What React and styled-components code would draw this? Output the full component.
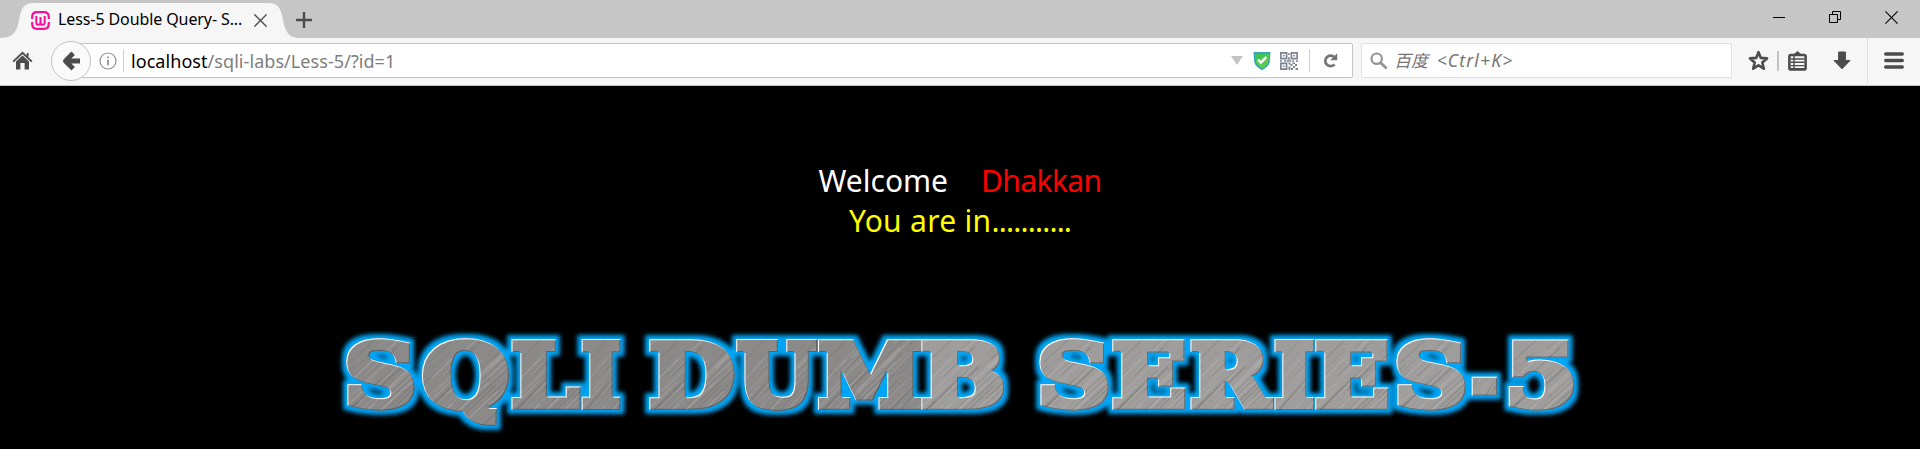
import React from "react";
import styled, { createGlobalStyle } from "styled-components";

const GlobalStyle = createGlobalStyle`
  * { box-sizing: border-box; }
  html, body { margin: 0; background: #000; overflow: hidden; }
  svg { display: block; flex: none; }
`;

const ui = `"Noto Sans", "Noto Sans CJK SC", sans-serif`;

const Window = styled.div`
  width: 1920px;
  height: 449px;
  display: flex;
  flex-direction: column;
  background: #000;
  font-family: ${ui};
`;

const TabBar = styled.header`
  flex: none;
  height: 38px;
  display: flex;
  align-items: flex-start;
  background: #c6c6c6;
`;

const Tab = styled.div`
  position: relative;
  width: 300px;
  height: 38px;
  padding: 2px 0 0 31px;
  display: flex;
  align-items: center;
`;

const TabShape = styled.svg`
  position: absolute;
  left: 0;
  top: 0;
`;

const TabTitle = styled.span`
  position: relative;
  width: 196px;
  margin-left: 8px;
  margin-top: -2px;
  font-size: 16px;
  line-height: 20px;
  letter-spacing: ${(p) => p.$track}px;
  color: #000;
  white-space: nowrap;
`;

const Layer = styled.span`
  position: relative;
  display: flex;
`;

const NewTab = styled.div`
  margin-top: 12px;
  margin-left: -4px;
`;

const WindowButtons = styled.div`
  margin-left: auto;
  height: 34px;
  padding-right: 22px;
  display: flex;
  align-items: center;
  gap: 43px;
`;

const Toolbar = styled.nav`
  flex: none;
  height: 48px;
  display: flex;
  align-items: center;
  padding: 0 0 2px 12px;
  background: #f6f6f6;
  border-bottom: 1px solid #c2c2c2;
`;

const BackButton = styled.div`
  position: relative;
  z-index: 1;
  width: 40px;
  height: 40px;
  margin-left: 18px;
  border: 1px solid #c2c2c2;
  border-radius: 50%;
  background: #fafafa;
  display: flex;
  align-items: center;
  justify-content: center;
`;

const Field = styled.div`
  height: 35px;
  display: flex;
  align-items: center;
  background: #fff;
  border: 1px solid ${(p) => p.$line};
  border-radius: 2px;
`;

const AddressBar = styled(Field)`
  width: 1282px;
  margin-left: -20px;
  padding: 0 14px 0 27px;
`;

const Url = styled.span`
  margin-left: 7px;
  font-size: 18px;
  line-height: 24px;
  letter-spacing: ${(p) => p.$track}px;
  color: #7d7d7d;
  white-space: nowrap;
`;

const Host = styled.span`
  color: #000;
`;

const AddressActions = styled.div`
  margin-left: auto;
  display: flex;
  align-items: center;
`;

const Rule = styled.i`
  width: ${(p) => p.$w || 1}px;
  height: ${(p) => p.$h}px;
  margin: 0 ${(p) => p.$right || 0}px 0 ${(p) => p.$left || 0}px;
  background: ${(p) => p.$c || "#cfcfcf"};
`;

const SearchBar = styled(Field)`
  width: 371px;
  margin-left: 8px;
  padding-left: 8px;
`;

const SearchHint = styled.span`
  margin-left: 6px;
  font-size: 17px;
  line-height: 24px;
  font-style: italic;
  color: #757575;
  white-space: pre;
`;

const Shortcut = styled.span`
  margin-left: 3px;
  font-size: 17.5px;
  letter-spacing: 1.15px;
`;

const ToolIcons = styled.div`
  flex: 1;
  padding-left: 16px;
  display: flex;
  align-items: center;
`;

const Gap = styled.i`
  width: ${(p) => p.$w}px;
`;

const Page = styled.main`
  flex: 1;
  min-height: 0;
  display: flex;
  flex-direction: column;
  align-items: center;
  padding-top: 75px;
`;

const Line = styled.div`
  display: flex;
  gap: ${(p) => p.$gap || 0}px;
  height: 40px;
  line-height: 40px;
  font-size: 30px;
  letter-spacing: ${(p) => p.$track || 0}px;
  color: ${(p) => p.$color};
  white-space: pre;
`;

const Name = styled.span`
  letter-spacing: -0.6px;
  color: #f00;
`;

const Dots = styled.span`
  letter-spacing: -0.8px;
`;

const Banner = styled.svg`
  margin-top: 89px;
  overflow: visible;
`;

/* Each letter of the banner with its left and right edge. */
const LETTERS = [
  ["S", 346, 415], ["Q", 422, 509], ["L", 511, 581], ["I", 581, 621],
  ["D", 649, 735], ["U", 736, 818], ["M", 818, 922], ["B", 921, 1004],
  ["S", 1039, 1109], ["E", 1112, 1186], ["R", 1190, 1274], ["I", 1274, 1315],
  ["E", 1315, 1389], ["S", 1396, 1466], ["-", 1471, 1498], ["5", 1509, 1575],
];

const BANNER_FONT = `"DejaVu Serif", serif`;
const STROKE = 8;

const measure = (() => {
  const ctx = document.createElement("canvas").getContext("2d");
  ctx.font = `bold 100px ${BANNER_FONT}`;
  return (ch) => {
    const m = ctx.measureText(ch);
    return { left: -m.actualBoundingBoxLeft, right: m.actualBoundingBoxRight };
  };
})();

const SCRATCHES = Array.from({ length: 110 }, (_, i) => {
  const r = (n) => Math.abs(Math.sin((i + 1) * n) * 43758.5453) % 1;
  return {
    x: r(12.98) * 150 - 40,
    y: r(78.23) * 150 - 100,
    len: 14 + r(3.71) * 40,
    light: r(9.17) > 0.45,
    o: 0.12 + r(5.31) * 0.3,
  };
});

function Letter({ ch, from, to }) {
  const m = measure(ch);
  const half = STROKE / 2;
  const sx = (to - from - STROKE) / (m.right - m.left);
  const sy = ch === "-" ? 0.75 : 0.86;
  const y = ch === "-" ? 406 : 405.5;
  const steel = from < 900 ? "url(#steel-dark)" : "url(#steel-light)";
  return (
    <g filter="url(#bevel)">
      <text
        transform={`translate(${from + half - m.left * sx} ${y}) scale(${sx} ${sy})`}
        fontFamily={BANNER_FONT}
        fontWeight="bold"
        fontSize="100"
        fill={steel}
        stroke={steel}
        strokeWidth={STROKE}
        vectorEffect="non-scaling-stroke"
      >
        {ch}
      </text>
    </g>
  );
}

const Steel = ({ id, base }) => (
  <pattern id={id} x="0" y="-90" width="110" height="130" patternUnits="userSpaceOnUse">
    <rect width="110" height="130" fill={base} />
    <g transform="translate(0 90)">
      {SCRATCHES.map((s, i) => (
        <path
          key={i}
          d={`M${s.x} ${s.y}l${s.len} ${-s.len * 1.1}`}
          stroke={s.light ? "#c4c2c0" : "#626060"}
          strokeOpacity={s.o}
          strokeWidth="1.1"
        />
      ))}
    </g>
  </pattern>
);

function BannerTitle() {
  return (
    <Banner width="1920" height="119" viewBox="0 330 1920 119">
      <defs>
        <Steel id="steel-dark" base="#8c8a89" />
        <Steel id="steel-light" base="#9f9d9b" />
        <filter id="bevel" x="-10%" y="-10%" width="120%" height="120%" colorInterpolationFilters="sRGB">
          <feOffset in="SourceAlpha" dx="1.2" dy="1.2" result="se" />
          <feFlood floodColor="#fff" />
          <feComposite in2="SourceAlpha" operator="in" />
          <feComposite in2="se" operator="out" result="light" />
          <feOffset in="SourceAlpha" dx="-1" dy="-1" result="nw" />
          <feFlood floodColor="#223744" floodOpacity="0.5" />
          <feComposite in2="SourceAlpha" operator="in" />
          <feComposite in2="nw" operator="out" result="dark" />
          <feMerge>
            <feMergeNode in="SourceGraphic" />
            <feMergeNode in="dark" />
            <feMergeNode in="light" />
          </feMerge>
        </filter>
        <filter id="glow" filterUnits="userSpaceOnUse" x="320" y="310" width="1280" height="139" colorInterpolationFilters="sRGB">
          <feMorphology in="SourceAlpha" operator="dilate" radius="4" />
          <feGaussianBlur stdDeviation="2" result="halo" />
          <feFlood floodColor="#00a6f8" />
          <feComposite in2="halo" operator="in" result="blue" />
          <feMerge>
            <feMergeNode in="blue" />
            <feMergeNode in="SourceGraphic" />
          </feMerge>
        </filter>
      </defs>
      <g filter="url(#glow)">
        {LETTERS.map(([ch, from, to]) => (
          <Letter key={from} ch={ch} from={from} to={to} />
        ))}
      </g>
    </Banner>
  );
}

const Favicon = () => (
  <svg width="19" height="19" viewBox="0 0 19 19" fill="none" stroke="#f6109b">
    <path d="M1.2 8V6Q1.2 1.2 6 1.2H13Q17.8 1.2 17.8 6V8M17.8 11V13Q17.8 17.8 13 17.8H6Q1.2 17.8 1.2 13V11" strokeWidth="2.2" />
    <path d="M5.3 5V11.2Q5.3 13.7 7.4 13.7T9.5 11.2V6M9.5 11.2Q9.5 13.7 11.6 13.7T13.7 11.2V5" strokeWidth="2" />
  </svg>
);

const Cross = ({ size, width, color }) => (
  <svg width={size} height={size} viewBox="0 0 13 13" stroke={color} strokeWidth={width}>
    <path d="M.4.4 12.6 12.6M12.6.4.4 12.6" />
  </svg>
);

const HomeIcon = () => (
  <svg width="21" height="19" viewBox="0 0 21 19" fill="#4c4c4c">
    <path d="M10.5 4.6 17 10.6V18.5H12.6V12H8.4V18.5H4V10.6Z" />
    <path d="M1.2 10.6 10.5 1.7 19.8 10.6M15.7 2V5.5" fill="none" stroke="#4c4c4c" strokeWidth="1.9" />
  </svg>
);

const BackIcon = () => (
  <svg width="20" height="20" viewBox="0 0 20 20" fill="none" stroke="#4c4c4c" strokeWidth="4.8" strokeLinejoin="round">
    <path d="M12.2 2.2 4.4 10 12.2 17.8M5 10H19" />
  </svg>
);

const InfoIcon = () => (
  <svg width="18" height="18" viewBox="0 0 18 18" fill="none" stroke="#919191">
    <circle cx="9" cy="9" r="8" strokeWidth="1.2" />
    <path d="M9 7.8V13.2M9 4.5V6.3" strokeWidth="1.8" />
  </svg>
);

const ShieldIcon = () => (
  <svg width="18" height="20" viewBox="0 0 18 20">
    <path d="M.5 1H17.5L16.8 11Q16 15.5 9 19.3Q2 15.5 1.2 11Z" fill="#35a5b8" />
    <path d="M2 2.4H16L15.4 10.5Q14.5 14.5 9 17.6Q3.5 14.5 2.6 10.5Z" fill="#43c254" />
    <path d="M16 2.4L15.4 10.5Q14.5 14.5 9 17.6L2.6 11Z" fill="#62ce55" opacity=".7" />
    <path d="M5 8.7 8 11.6 13.2 6.2" fill="none" stroke="#fff" strokeWidth="2.4" />
  </svg>
);

const QrIcon = () => (
  <svg width="18" height="18" viewBox="0 0 18 18" fill="none" stroke="#7c8492" strokeWidth="1.7">
    <path d="M.9.9H6.6V6.6H.9ZM11.4.9H17.1V6.6H11.4ZM.9 11.4H6.6V17.1H.9Z" />
    <path
      stroke="none"
      fill="#7c8492"
      d="M3 3H4.6V4.6H3ZM13.4 3H15V4.6H13.4ZM3 13.4H4.6V15H3ZM8.2 1H9.7V3H8.2ZM8.2 5H9.7V8H8.2ZM0 8.2H2V9.8H0ZM4 8.2H6V9.8H4ZM6.5 8.2H11V9.8H6.5ZM12 8.2H14V9.8H12ZM16 8.2H18V9.8H16ZM8.5 10.5H10.5V12.5H8.5ZM10.5 12H12.5V14H10.5ZM12.5 10.5H15V12H12.5ZM15 12H17V14H15ZM8.5 14.5H10.5V18H8.5ZM13 14H15V16H13ZM11 16H13V18H11ZM15.5 16H18V18H15.5Z"
    />
  </svg>
);

const ReloadIcon = () => (
  <svg width="15" height="15" viewBox="0 0 15 15">
    <path d="M11.4 4.2A5.3 5.3 0 1 0 11.6 11.4" fill="none" stroke="#757575" strokeWidth="2.7" />
    <path d="M14.2.2V7.2H7.2Z" fill="#757575" />
  </svg>
);

const SearchIcon = () => (
  <svg width="18" height="18" viewBox="0 0 18 18" fill="none" stroke="#959595">
    <circle cx="6.7" cy="6.7" r="5.2" strokeWidth="2.2" />
    <path d="M10.4 10.4 16.6 16.6" strokeWidth="2.8" />
  </svg>
);

const StarIcon = () => (
  <svg width="21" height="21" viewBox="0 0 21 21" fill="none" stroke="#4c4c4c" strokeWidth="2.6" strokeLinejoin="round">
    <path d="M10.5 2.2 12.8 7.9 19 8.4 14.3 12.5 15.8 18.7 10.5 15.4 5.2 18.7 6.7 12.5 2 8.4 8.2 7.9Z" />
  </svg>
);

const ListIcon = () => (
  <svg width="19" height="20" viewBox="0 0 19 20" fill="none" stroke="#4c4c4c">
    <rect x="1.4" y="4" width="16.2" height="14.4" rx="1.5" strokeWidth="2.6" />
    <path d="M4.5 4.2 9.5 0 14.5 4.2Z" fill="#4c4c4c" stroke="none" />
    <path d="M3 8H16M3 11.3H16M3 14.6H16M6 5V17" strokeWidth="1.4" />
  </svg>
);

const DownloadIcon = () => (
  <svg width="18" height="19" viewBox="0 0 18 19" fill="#4c4c4c" stroke="#4c4c4c" strokeLinejoin="round">
    <path d="M5.6 1H12.4V9.5H17L9 17.8 1 9.5H5.6Z" />
  </svg>
);

const MenuIcon = () => (
  <svg width="20" height="17" viewBox="0 0 20 17" stroke="#4c4c4c" strokeWidth="3.6" strokeLinecap="round">
    <path d="M1.8 2H18.2M1.8 8.5H18.2M1.8 15H18.2" />
  </svg>
);

export default function App() {
  return (
    <Window>
      <GlobalStyle />
      <TabBar>
        <Tab>
          <TabShape width="300" height="38" viewBox="0 0 300 38">
            <path d="M0 38C11 38 15 34 18 25L20 15C22 7 25 3 34 3H268C277 3 280 7 282 15L284 25C287 34 290 38 300 38Z" fill="#f6f6f6" />
          </TabShape>
          <Layer><Favicon /></Layer>
          <TabTitle $track={-0.1}>Less-5 Double Query- S...</TabTitle>
          <Layer><Cross size={13} width={1.4} color="#4d4d4d" /></Layer>
        </Tab>
        <NewTab>
          <svg width="16" height="16" viewBox="0 0 16 16" stroke="#4c4c4c" strokeWidth="2.4">
            <path d="M8 0V16M0 8H16" />
          </svg>
        </NewTab>
        <WindowButtons>
          <svg width="13" height="13" viewBox="0 0 13 13"><path d="M0 6H12V7H0Z" /></svg>
          <svg width="13" height="13" viewBox="0 0 13 13" fill="none" stroke="#000">
            <path d="M.5 3.5H8.5V11.5H.5ZM3.5 3.5V.5H11.5V8.5H8.5" />
          </svg>
          <Cross size={13} width={1.1} color="#000" />
        </WindowButtons>
      </TabBar>
      <Toolbar>
        <HomeIcon />
        <BackButton><BackIcon /></BackButton>
        <AddressBar $line="#c4c4c4">
          <InfoIcon />
          <Rule $h={23} $left={6} />
          <Url $track={0.06}><Host>localhost</Host>/sqli-labs/Less-5/?id=1</Url>
          <AddressActions>
            <svg width="12" height="9" viewBox="0 0 12 9"><path d="M0 0H12L6 9Z" fill="#c3c3c3" /></svg>
            <Gap $w={10} />
            <ShieldIcon />
            <Gap $w={9} />
            <QrIcon />
            <Rule $h={23} $left={11} $right={13} />
            <ReloadIcon />
          </AddressActions>
        </AddressBar>
        <SearchBar $line="#e0e0e0">
          <SearchIcon />
          <SearchHint>百度<Shortcut> &lt;Ctrl+K&gt;</Shortcut></SearchHint>
        </SearchBar>
        <ToolIcons>
          <StarIcon />
          <Rule $w={2} $h={20} $left={8} $right={9} $c="#c4c4c4" />
          <ListIcon />
          <Gap $w={26} />
          <DownloadIcon />
          <Rule $h={45} $left={16} $right={16} $c="#dedede" />
          <MenuIcon />
        </ToolIcons>
      </Toolbar>
      <Page>
        <Line $color="#fff" $gap={33}><span>Welcome</span><Name>Dhakkan</Name></Line>
        <Line $color="#ff0" $track={0.3}><span>You are in<Dots>...........</Dots></span></Line>
        <BannerTitle />
      </Page>
    </Window>
  );
}
